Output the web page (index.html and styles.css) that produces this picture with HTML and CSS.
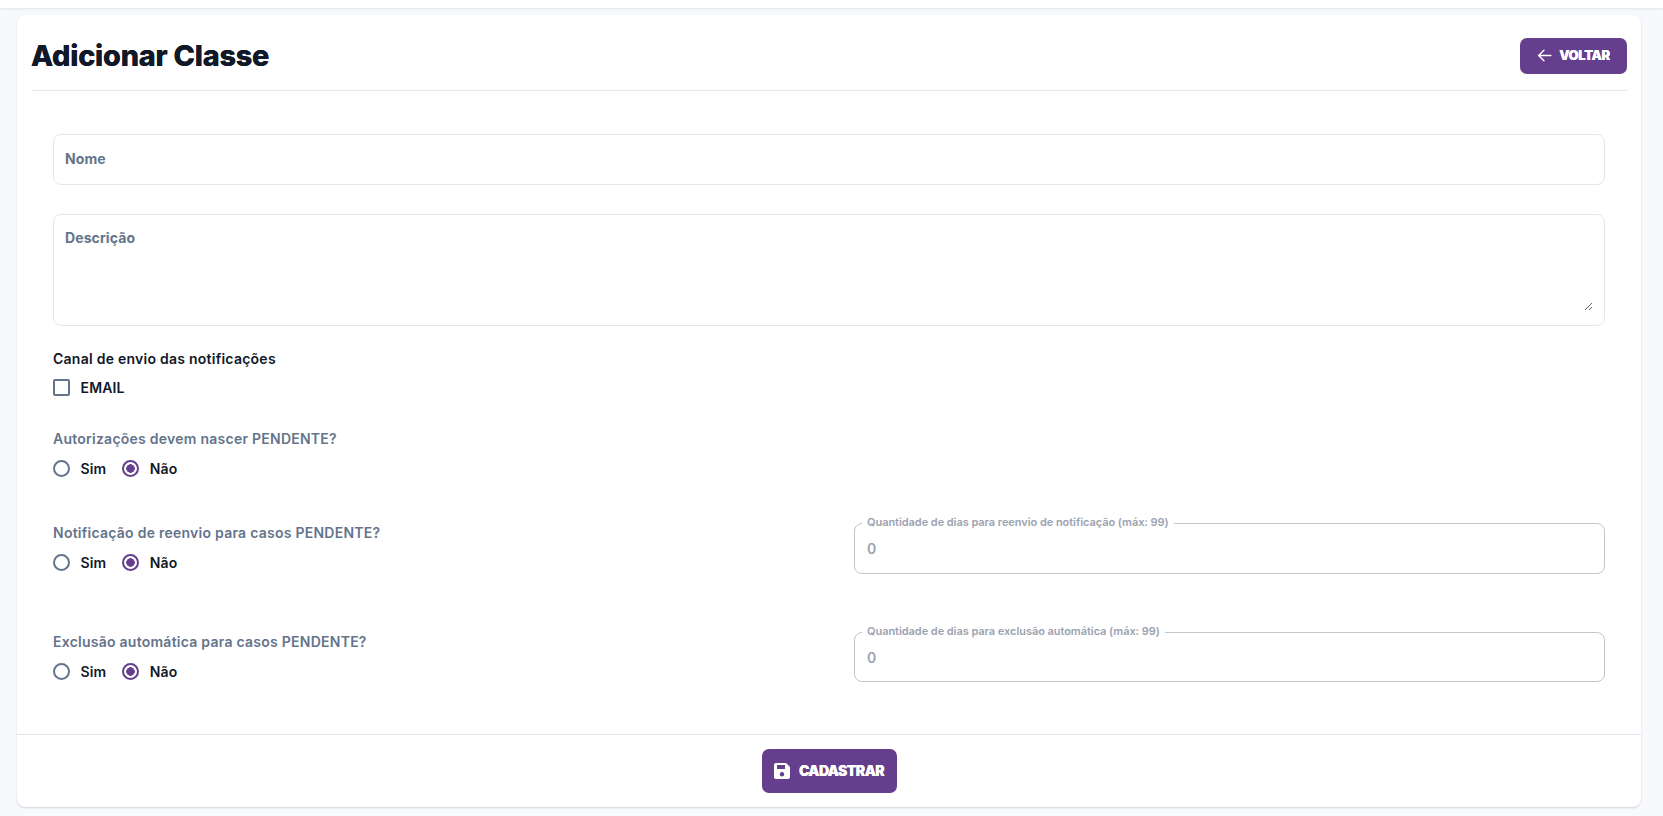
FILE: index.html
```html
<!DOCTYPE html>
<html lang="pt-BR">
<head>
<meta charset="utf-8">
<title>Adicionar Classe</title>
<link rel="stylesheet" href="styles.css">
</head>
<body>
<div class="topbar"></div>
<main class="card">
  <header class="card-head">
    <h1 class="title">Adicionar Classe</h1>
    <button class="btn btn-back" type="button">
      <svg class="icon-back" viewBox="0 0 14 14" width="15" height="15" fill="none" stroke="currentColor" stroke-width="1.3" stroke-linecap="round" stroke-linejoin="round"><path d="M13 7H1.500M6.500 2 1.500 7l5 5"/></svg>
      <span>VOLTAR</span>
    </button>
  </header>
  <form class="form">
    <input class="field field-name" type="text" placeholder="Nome">
    <div class="field-wrap">
      <textarea class="field-desc" placeholder="Descrição"></textarea>
    </div>

    <div class="group-channel">
      <div class="label-dark">Canal de envio das notificações</div>
      <label class="option"><span class="check"></span>EMAIL</label>
    </div>

    <div class="group-pend">
      <div class="label-muted">Autorizações devem nascer PENDENTE?</div>
      <div class="options">
        <label class="option"><span class="radio"></span>Sim</label>
        <label class="option"><span class="radio on"></span>Não</label>
      </div>
    </div>

    <div class="row row-resend">
      <div class="row-left">
        <div class="label-muted">Notificação de reenvio para casos PENDENTE?</div>
        <div class="options">
          <label class="option"><span class="radio"></span>Sim</label>
          <label class="option"><span class="radio on"></span>Não</label>
        </div>
      </div>
      <fieldset class="outlined">
        <legend>Quantidade de dias para reenvio de notificação (máx: 99)</legend>
        <div class="value">0</div>
      </fieldset>
    </div>

    <div class="row row-delete">
      <div class="row-left">
        <div class="label-muted">Exclusão automática para casos PENDENTE?</div>
        <div class="options">
          <label class="option"><span class="radio"></span>Sim</label>
          <label class="option"><span class="radio on"></span>Não</label>
        </div>
      </div>
      <fieldset class="outlined">
        <legend>Quantidade de dias para exclusão automática (máx: 99)</legend>
        <div class="value">0</div>
      </fieldset>
    </div>
  </form>
  <footer class="card-foot">
    <button class="btn btn-save" type="button">
      <svg viewBox="0 0 16 16" width="16" height="16"><path fill="currentColor" fill-rule="evenodd" d="M2 0h10l4 4v10a2 2 0 0 1-2 2H2a2 2 0 0 1-2-2V2a2 2 0 0 1 2-2Zm1 2v4h8V2H3Zm5 7a2.2 2.2 0 1 0 0 4.400a2.200 2.200 0 0 0 0-4.400Z"/></svg>
      <span>CADASTRAR</span>
    </button>
  </footer>
</main>
</body>
</html>
```
FILE: styles.css
```css
* { box-sizing: border-box; }
html, body { height: 100%; }
body {
  margin: 0;
  background: #f8f9fc;
  font-family: Inter, "Liberation Sans", sans-serif;
  color: #111827;
  overflow: hidden;
}
.topbar {
  height: 8px;
  background: #fff;
  box-shadow: 0 1px 3px rgba(30, 30, 70, .1);
}
.card {
  width: 1624px;
  height: 792px;
  margin: 7px 0 0 17px;
  background: #fff;
  border-radius: 8px;
  box-shadow: 0 1px 2px rgba(60, 60, 110, .2);
  display: flex;
  flex-direction: column;
}
.card-head {
  margin: 0 14px;
  height: 76px;
  flex: none;
  display: flex;
  align-items: center;
  justify-content: space-between;
  border-bottom: 1px solid #e8e6f3;
  padding-top: 6px;
}
.title {
  margin: 0;
  font-size: 28.8px;
  line-height: 36px;
  font-weight: 800;
  letter-spacing: -.2px;
  text-shadow: 0 0 .6px #111827;
  color: #111827;
}
.btn {
  border: 0;
  background: #653f8d;
  color: #fff;
  display: inline-flex;
  align-items: center;
  justify-content: center;
  font-family: Inter, "Liberation Sans", sans-serif;
  font-weight: 900;
  text-shadow: 0 0 .6px #fff;
  border-radius: 7px;
  padding: 0 0 1px;
}
.btn-back {
  width: 107px;
  height: 36px;
  gap: 7px;
  font-size: 13px;
  letter-spacing: -.35px;
}
.btn-save {
  width: 135px;
  height: 44px;
  gap: 9px;
  font-size: 14px;
  letter-spacing: -.55px;
}
.form {
  flex: 1;
  padding: 43px 36px 0;
  display: flex;
  flex-direction: column;
}
.field, .field-desc {
  font-family: Inter, "Liberation Sans", sans-serif;
  font-size: 14px;
  font-weight: 700;
  letter-spacing: .1px;
  outline: none;
}
.field {
  display: block;
  width: 100%;
  height: 51px;
  border: 1px solid #e6e5ef;
  border-radius: 8px;
  background: #fff;
  padding: 0 11px 2px;
}
.field::placeholder, .field-desc::placeholder { color: #64748b; opacity: 1; }
.field-wrap {
  height: 112px;
  margin-top: 29px;
  border: 1px solid #e6e5ef;
  border-radius: 8px;
  padding: 14px 11px 14px;
  display: flex;
}
.field-desc {
  flex: 1;
  border: 0;
  padding: 0;
  line-height: 17px;
  resize: vertical;
}
.label-dark, .label-muted {
  font-size: 14px;
  line-height: 17px;
  font-weight: 600;
  letter-spacing: .25px;
}
.label-dark { color: #111827; }
.label-muted { color: #64748b; }
.group-channel { margin-top: 24px; }
.group-pend { margin-top: 30px; }
.option {
  display: inline-flex;
  align-items: center;
  gap: 10.5px;
  font-size: 14px;
  line-height: 17px;
  font-weight: 600;
  letter-spacing: .15px;
  color: #111827;
}
.group-channel .option { margin-top: 12px; }
.options { display: flex; gap: 16px; margin-top: 13px; }
.check {
  width: 17px;
  height: 17px;
  border: 2px solid #64748b;
  border-radius: 2px;
  background: #fff;
}
.radio {
  width: 17px;
  height: 17px;
  border: 2px solid #64748b;
  border-radius: 50%;
  background: #fff;
}
.radio.on {
  border-color: #653f8d;
  background: radial-gradient(circle, #653f8d 0 4px, #fff 4.500px);
}
.row {
  display: flex;
  justify-content: space-between;
  align-items: flex-start;
}
.row-left { padding-top: 9px; }
.row-resend { margin-top: 38px; }
.row-delete { margin-top: 50px; }
.row-delete .outlined { height: 58px; }
.outlined {
  width: 751px;
  height: 59px;
  margin: 0;
  padding: 0 7px;
  border: 1px solid #c4c4cc;
  border-radius: 8px;
  min-width: 0;
}
.outlined legend {
  padding: 0 5px 2px;
  font-size: 11px;
  line-height: 14px;
  font-weight: 600;
  letter-spacing: -.05px;
  color: #9ca3af;
}
.value {
  font-size: 14px;
  line-height: 17px;
  font-weight: 600;
  color: #9ca3af;
  margin: 9px 0 0 5px;
}
.card-foot {
  flex: none;
  height: 73px;
  border-top: 1px solid #e6e5ee;
  display: flex;
  justify-content: center;
  align-items: center;
}
```
